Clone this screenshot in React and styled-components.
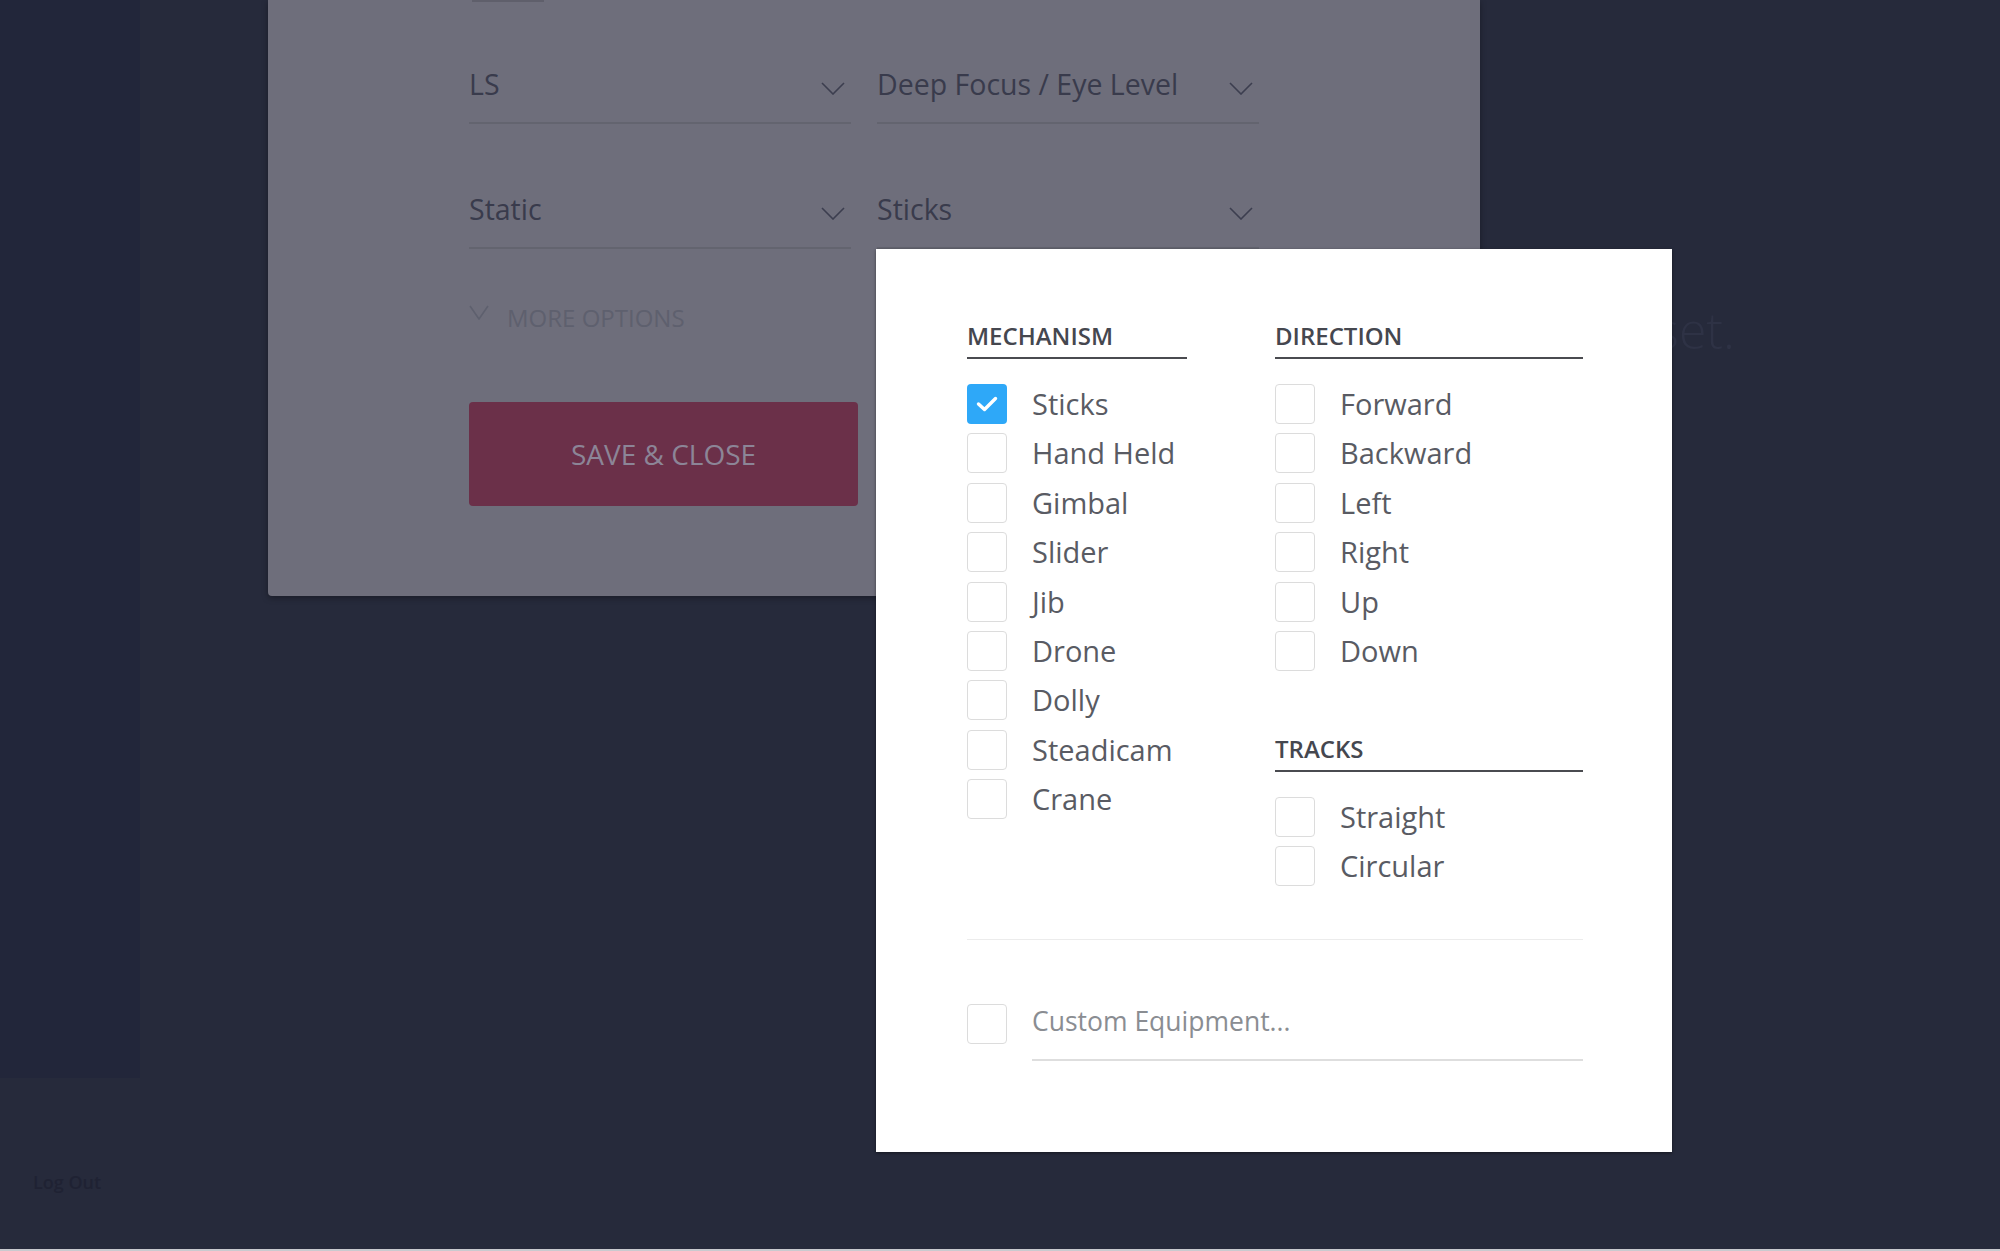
import React from 'react'
import styled, { createGlobalStyle } from 'styled-components'

const GlobalStyle = createGlobalStyle`
  html, body {
    margin: 0;
    padding: 0;
    background: #262a3b;
    font-family: "Open Sans", "Noto Sans", sans-serif;
  }
  * { box-sizing: border-box; }
`

const mechanism = ['Sticks', 'Hand Held', 'Gimbal', 'Slider', 'Jib', 'Drone', 'Dolly', 'Steadicam', 'Crane']
const direction = ['Forward', 'Backward', 'Left', 'Right', 'Up', 'Down']
const tracks = ['Straight', 'Circular']

function Chevron({ w = 24, h = 13 }) {
  return (
    <ChevronSvg width={w} height={h} viewBox={`0 0 ${w} ${h}`}>
      <polyline points={`1,1 ${w / 2},${h - 1} ${w - 1},1`} fill="none" stroke="currentColor" strokeWidth="1.6" />
    </ChevronSvg>
  )
}

function CheckItem({ label, checked }) {
  return (
    <Item>
      <Box checked={checked}>
        {checked && (
          <svg width="22" height="16" viewBox="0 0 22 16">
            <polyline points="2.5,8 8.5,13.5 19.5,2.5" fill="none" stroke="#fff" strokeWidth="3.4" strokeLinecap="round" strokeLinejoin="round" />
          </svg>
        )}
      </Box>
      <Label>{label}</Label>
    </Item>
  )
}

function App() {
  return (
    <>
      <GlobalStyle />
      <Page>
        <Side>
          <SideStrip />
          <SideFoot>Log Out</SideFoot>
        </Side>
        <Main>
          <Modal>
            <TabMark />
            <FieldGrid>
              <Field>LS<Chevron /></Field>
              <Field>Deep Focus / Eye Level<Chevron /></Field>
              <Field>Static<Chevron /></Field>
              <Field>Sticks<Chevron /></Field>
            </FieldGrid>
            <MoreOptions>
              <Chevron w={20} h={15} />
              <span>MORE OPTIONS</span>
            </MoreOptions>
            <SaveButton>SAVE &amp; CLOSE</SaveButton>
          </Modal>
          <GhostText>Get set.</GhostText>
        </Main>

        <Popup>
          <Columns>
            <Column width={220}>
              <Heading>MECHANISM</Heading>
              <List>
                {mechanism.map((m, i) => <CheckItem key={m} label={m} checked={i === 0} />)}
              </List>
            </Column>
            <Column width={308}>
              <Heading>DIRECTION</Heading>
              <List>
                {direction.map((d) => <CheckItem key={d} label={d} />)}
              </List>
              <Heading spaced>TRACKS</Heading>
              <List>
                {tracks.map((t) => <CheckItem key={t} label={t} />)}
              </List>
            </Column>
          </Columns>
          <Divider />
          <CustomRow>
            <Box />
            <CustomInput placeholder="Custom Equipment..." />
          </CustomRow>
        </Popup>
      </Page>
    </>
  )
}

export default App

const Page = styled.div`
  position: relative;
  display: flex;
  width: 2000px;
  height: 1251px;
  overflow: hidden;
  background: #262a3b;
  border-bottom: 2px solid #c9cacf;
`
const Side = styled.div`
  width: 140px;
  display: flex;
  flex-direction: column;
`
const SideStrip = styled.div`
  height: 1078px;
  background: #22263a;
`
const SideFoot = styled.div`
  padding: 94px 0 0 33px;
  font-size: 18px;
  line-height: 20px;
  font-weight: 600;
  color: #1f2233;
`
const Main = styled.div`
  flex: 1;
  display: flex;
  align-items: flex-start;
  padding-left: 128px;
`
const Modal = styled.div`
  width: 1212px;
  height: 596px;
  flex-shrink: 0;
  background: #6e6e7b;
  border-radius: 0 0 4px 4px;
  box-shadow: 0 2px 6px rgba(0, 0, 0, 0.35);
  padding-left: 201px;
  display: flex;
  flex-direction: column;
  align-items: flex-start;
`
const TabMark = styled.div`
  width: 72px;
  height: 2px;
  margin-left: 3px;
  background: #5f5f6b;
`
const FieldGrid = styled.div`
  margin-top: 68px;
  display: grid;
  grid-template-columns: 382px 382px;
  column-gap: 26px;
  row-gap: 71px;
`
const Field = styled.div`
  display: flex;
  justify-content: space-between;
  align-items: center;
  height: 54px;
  padding-bottom: 24px;
  line-height: 30px;
  font-size: 28.5px;
  color: #393b4c;
  border-bottom: 2px solid #63646f;

  svg {
    margin-top: 8px;
  }
`
const ChevronSvg = styled.svg`
  color: #3c3e4f;
  margin-right: 6px;
  flex-shrink: 0;
`
const MoreOptions = styled.div`
  margin-top: 54px;
  display: flex;
  align-items: flex-start;
  font-size: 24px;
  line-height: 30px;
  color: #5e606e;

  svg {
    color: #5e606e;
    margin: 2px 18px 0 0;
  }
`
const SaveButton = styled.div`
  margin-top: 69px;
  width: 389px;
  height: 104px;
  border-radius: 4px;
  background: #6b3049;
  color: #8c8597;
  font-size: 28px;
  display: flex;
  align-items: center;
  justify-content: center;
`
const GhostText = styled.div`
  margin-top: 300px;
  width: 255px;
  flex-shrink: 0;
  text-align: right;
  white-space: nowrap;
  font-size: 50px;
  line-height: 60px;
  font-weight: 300;
  color: #2e3245;
`
const Popup = styled.div`
  position: absolute;
  left: 876px;
  top: 249px;
  width: 796px;
  height: 903px;
  padding: 72px 89px 0 91px;
  background: #fff;
  box-shadow: 0 1px 3px rgba(0, 0, 0, 0.45);
`
const Columns = styled.div`
  display: flex;
  gap: 88px;
  align-items: flex-start;
`
const Column = styled.div`
  width: ${(p) => p.width}px;
  display: flex;
  flex-direction: column;
`
const Heading = styled.div`
  margin-top: ${(p) => (p.spaced ? '63px' : '0')};
  font-size: 24px;
  line-height: 30px;
  font-weight: 600;
  color: #45474f;
  padding-bottom: 6px;
  border-bottom: 2px solid #4a4b50;
`
const List = styled.div`
  margin-top: 25px;
  display: flex;
  flex-direction: column;
  gap: 9.4px;
`
const Item = styled.div`
  display: flex;
  align-items: center;
  gap: 25px;
  height: 40px;
`
const Box = styled.span`
  width: 40px;
  height: 40px;
  flex-shrink: 0;
  border-radius: 4px;
  border: ${(p) => (p.checked ? 'none' : '1.5px solid #dcdcdc')};
  background: ${(p) => (p.checked ? '#2ea8f8' : '#fff')};
  display: flex;
  align-items: center;
  justify-content: center;
`
const Label = styled.span`
  font-size: 29px;
  line-height: 40px;
  color: #595b63;
`
const Divider = styled.div`
  margin-top: 53px;
  height: 1px;
  background: #ececec;
`
const CustomRow = styled.div`
  margin-top: 64px;
  display: flex;
  align-items: flex-start;
  gap: 25px;
`
const CustomInput = styled.input`
  flex: 1;
  height: 57px;
  padding: 0 0 21px;
  border: none;
  border-bottom: 2px solid #dedede;
  outline: none;
  font-family: "Open Sans", "Noto Sans", sans-serif;
  font-size: 26.5px;
  line-height: 34px;
  color: #595b63;
  background: transparent;

  &::placeholder {
    color: #8a8d92;
  }
`
